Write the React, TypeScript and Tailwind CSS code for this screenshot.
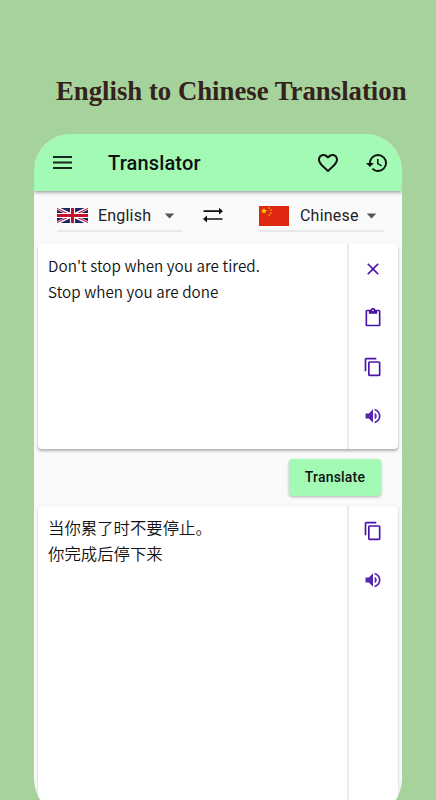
import { ReactNode } from "react";
import {
    MdArrowDropDown,
    MdClose,
    MdContentCopy,
    MdContentPaste,
    MdFavoriteBorder,
    MdHistory,
    MdVolumeUp,
} from "react-icons/md";

const UkFlag = () => (
    <svg viewBox="0 0 60 30" preserveAspectRatio="none" className="block h-[15px] w-[31px]">
        <rect width="60" height="30" fill="#1a2260" />
        <path d="M0 0L60 30M60 0L0 30" stroke="#fff" strokeWidth="6" />
        <path d="M0 1L28 15M60 29L32 15M60 1L32 15M0 29L28 15" stroke="#c8102e" strokeWidth="2" />
        <path d="M30 0V30M0 15H60" stroke="#fff" strokeWidth="10" />
        <path d="M30 0V30M0 15H60" stroke="#c8102e" strokeWidth="6" />
    </svg>
);

const STAR = "M0 -3L0.9 -0.95L3 -0.9L1.3 0.4L1.9 2.5L0 1.25L-1.9 2.5L-1.3 0.4L-3 -0.9L-0.9 -0.95Z";

const ChinaFlag = () => (
    <svg viewBox="0 0 30 20" className="block h-5 w-[30px]">
        <rect width="30" height="20" fill="#de2910" />
        <g fill="#ffde00">
            <path d={STAR} transform="translate(5 5)" />
            <path d={STAR} transform="translate(10 2) scale(.36)" />
            <path d={STAR} transform="translate(12 4) scale(.36)" />
            <path d={STAR} transform="translate(12 7) scale(.36)" />
            <path d={STAR} transform="translate(10 9) scale(.36)" />
        </g>
    </svg>
);

const MenuIcon = () => (
    <svg viewBox="0 0 19 13" className="block h-[13px] w-[19px]">
        <path d="M0 1H19M0 6.5H19M0 12H19" stroke="#16281b" strokeWidth="1.8" />
    </svg>
);

const SwapIcon = () => (
    <svg viewBox="0 0 20 16" className="block h-4 w-5">
        <path d="M0.5 4.2H17M3 12H19.5" stroke="#111" strokeWidth="1.7" fill="none" />
        <path d="M16 0.8L20 4.2L16 7.6ZM4 8.6L0 12L4 15.4Z" fill="#111" />
    </svg>
);

type LanguageSelectProps = {
    flag: ReactNode;
    name: string;
};

const LanguageSelect = ({ flag, name }: LanguageSelectProps) => {
    return (
        <div className="flex h-[33px] w-[125px] items-center border-b-2 border-[#e8e8e8] pt-[2px]">
            <div className="w-[31px] shrink-0">{flag}</div>
            <span className="ml-[10px] text-[16px] tracking-[0.2px] text-[#222]">{name}</span>
            <MdArrowDropDown className="mr-px ml-auto size-[23px] shrink-0 text-[#555]" />
        </div>
    );
};

type TextPanelProps = {
    lines: string[];
    className: string;
    children: ReactNode;
};

const TextPanel = ({ lines, className, children }: TextPanelProps) => {
    return (
        <div className={`mx-1 flex shrink-0 rounded bg-white ${className}`}>
            <div className="flex-1 pt-[9px] pl-[10px] font-['Noto_Sans_CJK_SC',sans-serif] leading-[25.5px] font-[350] text-[#111]">
                {lines.map((line) => (
                    <p key={line}>{line}</p>
                ))}
            </div>
            <div className="flex w-[51px] flex-col items-center border-l-2 border-[#ebebeb] pt-[15px] pr-[2px] text-[#4a14a8]">
                {children}
            </div>
        </div>
    );
};

const App = () => {
    return (
        <div className="flex h-[800px] w-[436px] flex-col overflow-hidden bg-[#a5d39b] font-[Roboto,sans-serif]">
            <h1 className="mt-[76px] ml-[56px] h-[58px] shrink-0 font-['Liberation_Serif',serif] text-[26.75px] leading-[30px] font-bold whitespace-nowrap text-[#35221c]">
                English to Chinese Translation
            </h1>

            <main className="ml-[34px] flex h-[682px] w-[368px] shrink-0 flex-col overflow-hidden rounded-[37px] bg-[#fafafa]">
                <header className="z-10 flex h-[57px] shrink-0 items-center bg-[#a2fab5] pr-[13px] pl-[19px] text-[#111] shadow-[0_1px_4px_rgba(0,0,0,0.45)]">
                    <MenuIcon />
                    <h2 className="ml-[36px] text-[20px] font-medium tracking-[0.15px]">Translator</h2>
                    <MdFavoriteBorder className="ml-auto size-6" />
                    <MdHistory className="ml-[25px] size-6" />
                </header>

                <div className="flex h-[53px] shrink-0 pt-[8px] pl-[23px]">
                    <LanguageSelect flag={<UkFlag />} name="English" />
                    <div className="ml-[21px] pt-[8px]">
                        <SwapIcon />
                    </div>
                    <div className="ml-[36px]">
                        <LanguageSelect flag={<ChinaFlag />} name="Chinese" />
                    </div>
                </div>

                <TextPanel
                    lines={["Don't stop when you are tired.", "Stop when you are done"]}
                    className="h-[205px] text-[15.2px] tracking-[0.06px] shadow-[0_2px_3px_rgba(0,0,0,0.3)]"
                >
                    <MdClose className="size-5" />
                    <MdContentPaste className="mt-[29px] size-5" />
                    <MdContentCopy className="mt-[29px] size-5" />
                    <MdVolumeUp className="mt-[29px] size-5 text-[#5527ae]" />
                </TextPanel>

                <button className="mt-[10px] mr-[21px] h-[37px] w-[92px] shrink-0 self-end rounded bg-[#a2fab5] text-[14px] font-medium tracking-[0.2px] text-[#111] shadow-[0_1px_3px_rgba(0,0,0,0.3)]">
                    Translate
                </button>

                <TextPanel
                    lines={["当你累了时不要停止。", "你完成后停下来"]}
                    className="mt-[10px] h-[330px] text-[16.4px] shadow-[0_1px_3px_rgba(0,0,0,0.22)]"
                >
                    <MdContentCopy className="size-5" />
                    <MdVolumeUp className="mt-[29px] size-5 text-[#5527ae]" />
                </TextPanel>
            </main>
        </div>
    );
};

export default App;
